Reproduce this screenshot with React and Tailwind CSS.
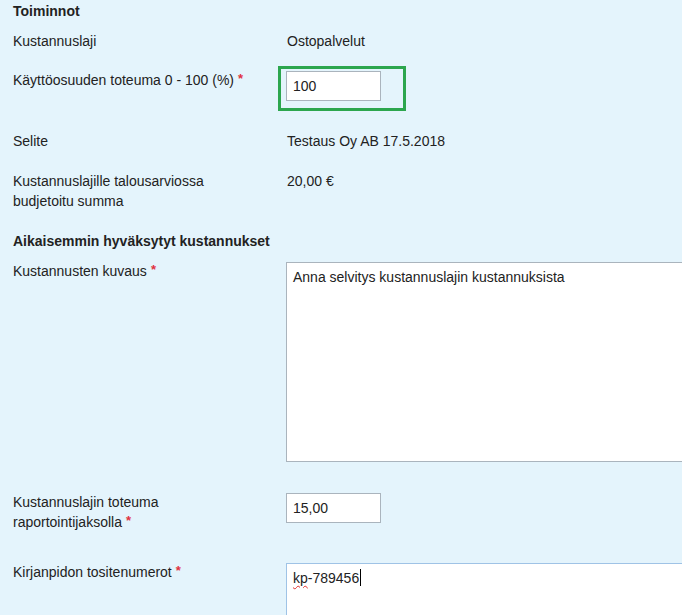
import { useState } from 'react';

const Required = () => (
  <span className="ml-1 text-[13px] font-bold leading-[0] text-[#e0323f] align-[2px]">*</span>
);

const Row = ({ label, children, className = '' }) => (
  <div className={`flex ${className}`}>
    <div className="w-[273px] shrink-0">{label}</div>
    <div className="flex-1 min-w-0">{children}</div>
  </div>
);

const App = () => {
  const [usage, setUsage] = useState('100');
  const [desc, setDesc] = useState('Anna selvitys kustannuslajin kustannuksista');
  const [actual, setActual] = useState('15,00');

  return (
    <div
      className="w-full min-h-[615px] overflow-hidden bg-[#e4f4fc] px-[13px] pt-[1px] text-[14px] leading-[20px] text-[#222]"
      style={{ fontFamily: '"Liberation Sans", Arial, sans-serif' }}
    >
      <h2 className="font-bold">Toiminnot</h2>

      <Row className="mt-[10px]" label="Kustannuslaji">
        <span className="pl-[1px]">Ostopalvelut</span>
      </Row>

      <Row
        className="mt-[19px]"
        label={
          <span>
            Käyttöosuuden toteuma 0 - 100 (%)
            <Required />
          </span>
        }
      >
        <div className="relative mt-[1px] w-[95px]">
          <input
            value={usage}
            onChange={(e) => setUsage(e.target.value)}
            className="block h-[30px] w-[95px] border border-[#aab4bd] bg-white px-[6px] text-[14px] outline-none"
          />
          <div className="pointer-events-none absolute -left-[8px] -top-[5px] h-[45px] w-[128px] border-[3px] border-[#2ca64e]" />
        </div>
      </Row>

      <Row className="mt-[30px]" label="Selite">
        <span className="pl-[1px]">Testaus Oy AB 17.5.2018</span>
      </Row>

      <Row
        className="mt-[20px]"
        label={
          <span>
            Kustannuslajille talousarviossa
            <br />
            budjetoitu summa
          </span>
        }
      >
        <span className="pl-[1px]">20,00 €</span>
      </Row>

      <h2 className="mt-[20px] font-bold">Aikaisemmin hyväksytyt kustannukset</h2>

      <Row
        className="mt-[10px]"
        label={
          <span>
            Kustannusten kuvaus
            <Required />
          </span>
        }
      >
        <textarea
          value={desc}
          onChange={(e) => setDesc(e.target.value)}
          className="mt-[1px] block h-[200px] w-[420px] resize-none border border-[#aab4bd] bg-white px-[6px] pt-[4px] text-[14px] leading-[20px] outline-none"
        />
      </Row>

      <Row
        className="mt-[30px]"
        label={
          <span>
            Kustannuslajin toteuma
            <br />
            raportointijaksolla
            <Required />
          </span>
        }
      >
        <input
          value={actual}
          onChange={(e) => setActual(e.target.value)}
          className="mt-[1px] block h-[30px] w-[95px] border border-[#aab4bd] bg-white px-[6px] text-[14px] outline-none"
        />
      </Row>

      <Row
        className="mt-[30px]"
        label={
          <span>
            Kirjanpidon tositenumerot
            <Required />
          </span>
        }
      >
        <div className="mt-[1px] h-[80px] w-[420px] border border-[#9fc3e6] bg-white px-[6px] pt-[4px]">
          <span className="underline decoration-wavy decoration-[#e03030] decoration-1 underline-offset-2">kp</span>
          <span>-789456</span>
          <span className="ml-[1px] inline-block h-[17px] w-px bg-black align-[-3px]" />
        </div>
      </Row>
    </div>
  );
};

export default App;
